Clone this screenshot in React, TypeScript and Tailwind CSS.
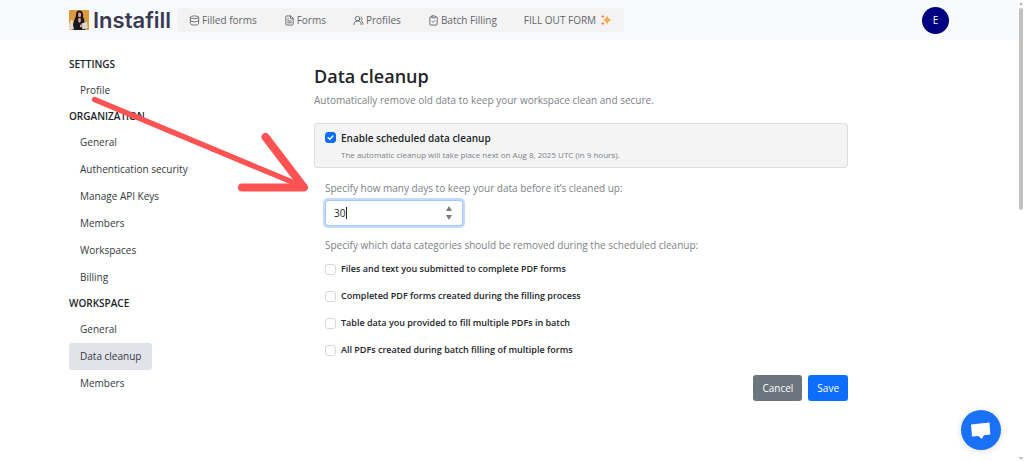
import { ClipboardCheck, Database, FileText, UsersRound } from "lucide-react";
import clsx from "clsx";
import type { ReactNode } from "react";

const sections = [
  { title: "SETTINGS", links: ["Profile"] },
  {
    title: "ORGANIZATION",
    links: ["General", "Authentication security", "Manage API Keys", "Members", "Workspaces", "Billing"],
  },
  { title: "WORKSPACE", links: ["General", "Data cleanup", "Members"] },
];

const categories = [
  "Files and text you submitted to complete PDF forms",
  "Completed PDF forms created during the filling process",
  "Table data you provided to fill multiple PDFs in batch",
  "All PDFs created during batch filling of multiple forms",
];

export default function App() {
  return (
    <div className="relative min-h-screen bg-white font-['Open_Sans',sans-serif] text-[10px] text-[#212529]">
      <Header />
      <div className="flex pt-3 pl-[69px] pr-4">
        <Sidebar />
        <DataCleanup />
      </div>
      <Arrow />
      <ChatButton />
      <ScrollTrack />
    </div>
  );
}

function Header() {
  return (
    <header className="flex h-10 items-center bg-[#f8fafc] pl-[69px] pr-[75px]">
      <a href="#" className="flex items-center gap-1">
        <LogoMark />
        <span className="font-['Inter',sans-serif] text-[22px] leading-none font-semibold text-[#3b3a54]">Instafill</span>
      </a>
      <nav className="ml-[6px] flex h-6 items-center gap-[27px] rounded bg-[#f3f3f3] px-3 whitespace-nowrap text-[#62666c]">
        <NavLink icon={<Database className="h-[11px] w-[11px]" />}>Filled forms</NavLink>
        <NavLink icon={<FileText className="h-[11px] w-[11px]" />}>Forms</NavLink>
        <NavLink icon={<UsersRound className="h-[11px] w-[11px]" />}>Profiles</NavLink>
        <NavLink icon={<ClipboardCheck className="h-[11px] w-[11px]" />}>Batch Filling</NavLink>
        <a href="#" className="flex items-center gap-1">
          FILL OUT FORM
          <Sparkles />
        </a>
      </nav>
      <button className="ml-auto h-[27px] w-[27px] rounded-full bg-[#000080] text-white" aria-label="Account">
        E
      </button>
    </header>
  );
}

function NavLink({ icon, children }: { icon: ReactNode; children: ReactNode }) {
  return (
    <a href="#" className="flex items-center gap-[2px]">
      {icon}
      {children}
    </a>
  );
}

function Sidebar() {
  return (
    <aside className="w-[245px] shrink-0">
      {sections.map((section) => (
        <section key={section.title}>
          <h2 className="flex h-[25px] items-center font-semibold">{section.title}</h2>
          <ul>
            {section.links.map((link) => (
              <li key={link} className="flex h-[27px]">
                <a
                  href="#"
                  className={clsx(
                    "flex items-center rounded-[3px] px-[11px] text-[#343a40]",
                    link === "Data cleanup" && "bg-[#e2e2ea]"
                  )}
                >
                  {link}
                </a>
              </li>
            ))}
          </ul>
        </section>
      ))}
    </aside>
  );
}

function DataCleanup() {
  return (
    <main className="max-w-[534px] flex-1 pt-3">
      <h1 className="text-[18px] leading-6 font-semibold">Data cleanup</h1>
      <p className="mt-[3px] leading-[18px] text-[#7b8288]">
        Automatically remove old data to keep your workspace clean and secure.
      </p>

      <form onSubmit={(e) => e.preventDefault()}>
        <div className="mt-[14px] flex h-[45px] gap-[5px] rounded-[3px] border border-[#dedede] bg-[#f4f4f4] px-[10px] pt-[5px]">
          <span className="relative mt-[3px] h-[11px] w-[11px]">
            <input
              id="enable"
              type="checkbox"
              defaultChecked
              className="peer block h-[11px] w-[11px] appearance-none rounded-[3px] border border-[#ced4da] bg-white checked:border-[#0d6efd] checked:bg-[#0d6efd]"
            />
            <svg
              viewBox="0 0 11 11"
              className="pointer-events-none absolute inset-0 hidden h-[11px] w-[11px] peer-checked:block"
              fill="none"
              stroke="white"
              strokeWidth="1.4"
              strokeLinecap="round"
              strokeLinejoin="round"
            >
              <path d="M3.2 5.7l1.6 1.6 3.1-3.3" />
            </svg>
          </span>
          <div>
            <label htmlFor="enable" className="block leading-[18px] font-semibold">
              Enable scheduled data cleanup
            </label>
            <p className="text-[8px] leading-4 text-[#7b8288]">
              The automatic cleanup will take place next on Aug 8, 2025 UTC (in 9 hours).
            </p>
          </div>
        </div>

        <div className="px-[11px]">
          <label htmlFor="days" className="mt-[11px] block leading-[18px] text-[#7b8288]">
            Specify how many days to keep your data before it’s cleaned up:
          </label>
          <DaysInput />

          <fieldset className="mt-[10px]">
            <legend className="leading-[18px] text-[#7b8288]">
              Specify which data categories should be removed during the scheduled cleanup:
            </legend>
            <div className="mt-[6px] flex flex-col gap-[9px]">
              {categories.map((category) => (
                <label key={category} className="flex h-[18px] items-center gap-[5px] text-[9px] font-semibold">
                  <input
                    type="checkbox"
                    className="h-[11px] w-[11px] appearance-none rounded-[3px] border border-[#d5d8dc] bg-white checked:bg-[#0d6efd]"
                  />
                  {category}
                </label>
              ))}
            </div>
          </fieldset>
        </div>

        <div className="mt-4 flex justify-end gap-[6px] text-white">
          <button type="button" className="h-[26px] rounded-[3px] bg-[#6c757d] px-[9px]">
            Cancel
          </button>
          <button type="submit" className="h-[26px] rounded-[3px] bg-[#0d6efd] px-[9px]">
            Save
          </button>
        </div>
      </form>
    </main>
  );
}

function DaysInput() {
  return (
    <div className="relative mt-[3px] w-[138px]">
      <input
        id="days"
        type="number"
        defaultValue={30}
        className="block h-[26px] w-full rounded-[3px] border border-[#a3c8fe] bg-white px-2 ring-2 ring-[#c2dbfe] outline-none [appearance:textfield]"
      />
      <span className="absolute top-[7px] left-[21px] h-3 w-px bg-[#212529]" />
      <svg viewBox="0 0 8 16" className="absolute top-[5px] right-[10px] h-4 w-2 text-[#7b7b7b]" fill="currentColor">
        <path d="M4 1l3 5H1z" />
        <path d="M4 15l3-5H1z" />
      </svg>
    </div>
  );
}

function LogoMark() {
  return (
    <svg viewBox="0 0 20 20" className="h-5 w-5">
      <rect width="20" height="20" rx="1" fill="#dc9a3c" />
      <path d="M8 1.5Q10.500 -.5 13 1.5Q14.500 4 14 7Q16 10 15 13L5.500 13Q5 9 7 6Q6.500 3 8 1.500z" fill="#1b1719" />
      <path d="M9.200 3.200Q10.500 2 12 3.200V6.200Q10.500 8 9.200 6.200z" fill="#d9a48b" />
      <path d="M3 20Q3 12 6 10L10 11 13 9.500Q16 12 16 20z" fill="#17171d" />
      <path d="M9.500 8h2l.5 3-1.500 2-1.500-2z" fill="#d9a48b" />
      <path d="M1 12l1.500-2.500 2 2L4 15l1 4.500H0V16z" fill="#e9d8cb" />
      <path d="M12.500 13.500l5.500-1.500 .8 6-5.300 1.500z" fill="#d8d8d4" />
      <path d="M11 14.500l3 .5-1 2.500-2-.5z" fill="#d9a48b" />
    </svg>
  );
}

function Sparkles() {
  return (
    <svg viewBox="0 0 12 12" className="h-3 w-3" fill="#f9a94b">
      <path d="M7.200 1.300Q7.800 5 11.500 6Q7.800 7 7.200 10.700Q6.500 7 3 6Q6.500 5 7.200 1.300z" />
      <path d="M2.800 .5Q3 2.200 4.600 2.600Q3 3 2.800 4.700Q2.500 3 1 2.600Q2.500 2.200 2.800 .5z" fill="#f58a5b" />
      <path d="M2.800 7.500Q3 9.200 4.700 9.600Q3 10 2.800 11.700Q2.500 10 .8 9.600Q2.500 9.200 2.800 7.500z" fill="#f58a5b" />
    </svg>
  );
}

// annotation pointing at the days field
function Arrow() {
  return (
    <svg
      viewBox="0 0 220 110"
      className="pointer-events-none absolute top-[90px] left-[90px] h-[110px] w-[220px]"
      fill="none"
      stroke="#ff5252"
      strokeLinecap="round"
      strokeLinejoin="round"
    >
      <path d="M4.500 9.500L214 97" strokeWidth="5.500" />
      <path d="M175.500 47L214 97.500H152" strokeWidth="8" />
    </svg>
  );
}

function ChatButton() {
  return (
    <button
      aria-label="Open chat"
      className="fixed right-[23px] bottom-3 h-10 w-10 rounded-full bg-[#1972f5] shadow-[0_1px_6px_rgba(0,0,0,0.15)]"
    >
      <svg viewBox="0 0 40 40" className="h-10 w-10" fill="white">
        <path d="M10 14.500L28.500 12.500 29.300 24.500 22.800 25.300 20.800 29 17.500 26 11 26.500z" />
      </svg>
    </button>
  );
}

function ScrollTrack() {
  return (
    <div className="fixed inset-y-0 right-0 flex w-[6px] flex-col items-center bg-white py-[2px]">
      <svg viewBox="0 0 4 3" className="h-[3px] w-1" fill="#b8b8b8">
        <path d="M2 0l2 3H0z" />
      </svg>
      <div className="mt-[3px] h-[44%] w-1 rounded-full bg-[#c1c1c1]" />
      <svg viewBox="0 0 4 3" className="mt-auto h-[3px] w-1" fill="#b8b8b8">
        <path d="M2 3l2-3H0z" />
      </svg>
    </div>
  );
}
